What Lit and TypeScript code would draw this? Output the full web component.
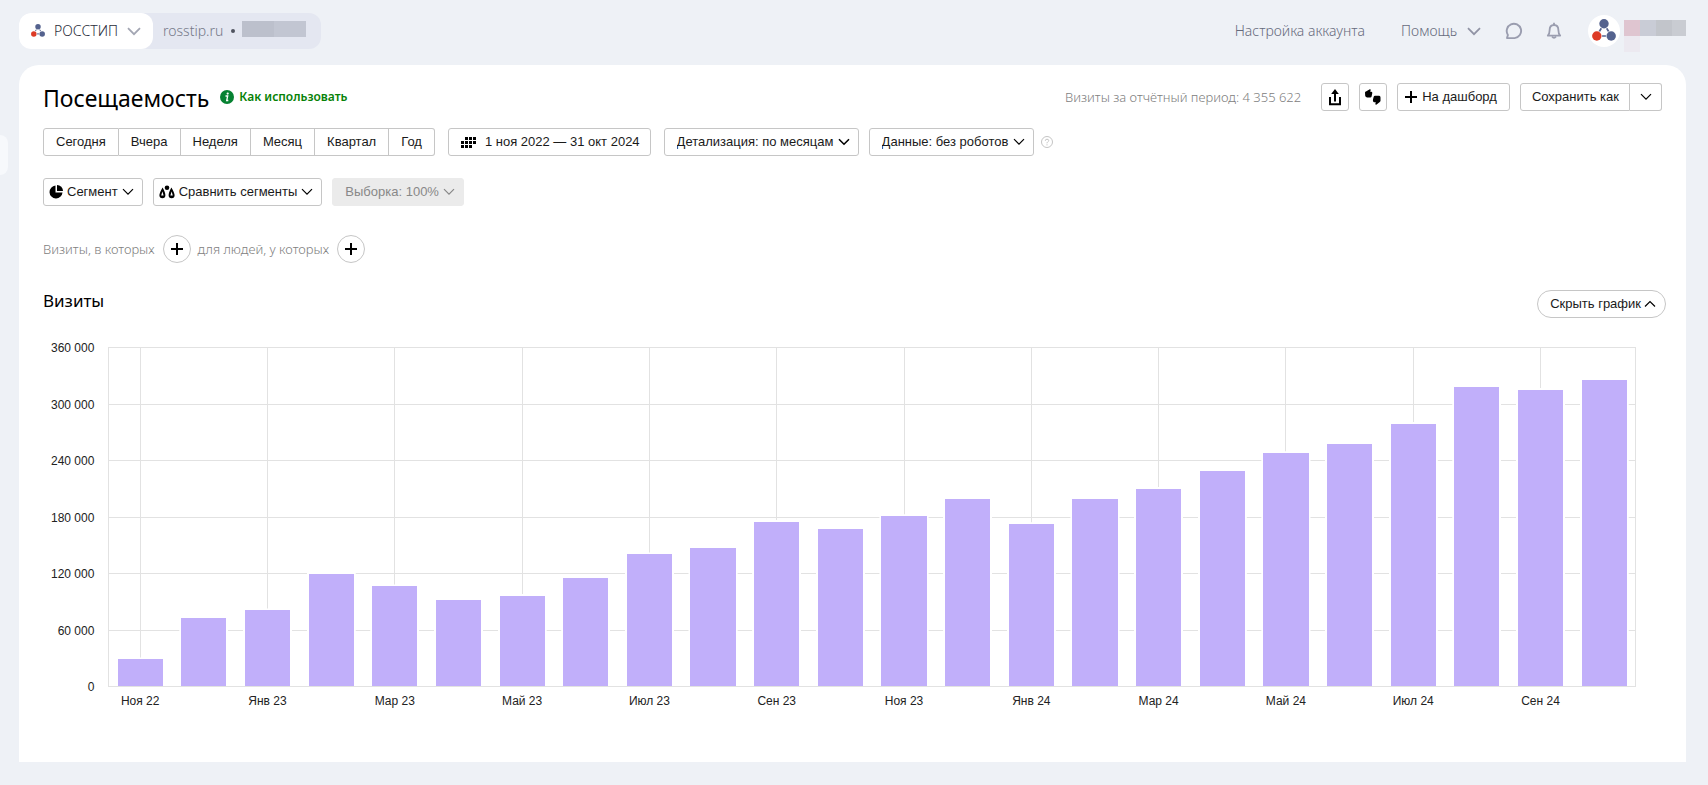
import { LitElement, html, svg, css } from "lit";
import { customElement, property, state } from "lit/decorators.js";
import { classMap } from "lit/directives/class-map.js";

const glyphs = {
  share: { w: 14, h: 18, body: svg`<path d="M2 9v7.200h10V9" fill="none" stroke="currentColor" stroke-width="2"/><path d="M7 13.500V4" stroke="currentColor" stroke-width="2"/><path d="M7 1l3.800 5H3.200z" fill="currentColor"/>` },
  thumbs: { w: 18, h: 16, body: svg`<path d="M1 3.600Q1 2.600 2.400 2.200L5.800.2Q7 0 6.600 1.400L6.200 2.700h1.200q1.100.2.9 1.300L7.600 7.400Q7.300 8.400 6.200 8.400H3Q1.300 8.200 1.200 6.800Z" fill="currentColor"/><path d="M9 12q-.2-1 .1-2l.6-2.300Q10 6.800 11 6.800h4.200q1.300.2 1.300 1.600v3.300q0 .9-1 1.500L12.600 15.600q-1.500.4-1.200-1.200l.4-1.200H10Q9.100 13 9 12Z" fill="currentColor"/>` },
  plus: { w: 12, h: 12, body: svg`<path d="M6 0v12M0 6h12" stroke="currentColor" stroke-width="2"/>` },
  calendar: { w: 15, h: 11, body: svg`<path d="M4 0h3v3H4zM8 0h3v3H8zM12 0h3v3h-3zM0 4h3v3H0zM4 4h3v3H4zM8 4h3v3H8zM12 4h3v3h-3zM0 8h3v3H0zM4 8h3v3H4zM8 8h3v3H8z" fill="currentColor"/>` },
  pie: { w: 14, h: 14, body: svg`<path d="M6.500.5v7h7A6.500 6.500 0 1 1 6.500.5Z" fill="currentColor"/><path d="M8 0a6 6 0 0 1 6 6H8Z" fill="currentColor"/>` },
  scales: { w: 16, h: 14, body: svg`<circle cx="8" cy="2.800" r="2.300" fill="currentColor"/><path d="M3.600 2.500Q6.400 7.500 6.400 10.300a3 3 0 0 1-6 0Q.4 8 3.600 2.500ZM12.400 2.500q3.200 5.500 3.200 7.800a3 3 0 0 1-6 0Q9.600 7.500 12.400 2.500Z" fill="currentColor"/><path d="M3.400 6.500l1.200 4h-2.400zM12.600 6.500l1.200 4h-2.400z" fill="#fff"/>` },
  down: { w: 12, h: 8, body: svg`<path d="M1 1.200l5 5 5-5" fill="none" stroke="currentColor" stroke-width="1.200"/>` },
  downBold: { w: 12, h: 8, body: svg`<path d="M1 1.200l5 5 5-5" fill="none" stroke="currentColor" stroke-width="1.600"/>` },
  up: { w: 12, h: 8, body: svg`<path d="M1 6.500l5-5 5 5" fill="none" stroke="currentColor" stroke-width="1.200"/>` },
  downWide: { w: 14, h: 9, body: svg`<path d="M1 1.200l6 6 6-6" fill="none" stroke="currentColor" stroke-width="1.800"/>` },
  info: { w: 14, h: 14, body: svg`<circle cx="7" cy="7" r="7" fill="currentColor"/><circle cx="7.700" cy="3.600" r="1.100" fill="#fff"/><path d="M5.500 6h2.200L6.700 10.500h1.600" fill="none" stroke="#fff" stroke-width="1.300"/>` },
  help: { w: 12, h: 12, body: svg`<circle cx="6" cy="6" r="5.500" fill="none" stroke="currentColor"/><path d="M4.300 4.800q0-1.600 1.700-1.600t1.700 1.400q0 .9-1 1.400-.7.400-.7 1.300M6 8.300v1.100" fill="none" stroke="currentColor"/>` },
  chat: { w: 18, h: 18, body: svg`<path d="M2 16.100l.9-3.200A7.200 7.200 0 1 1 9.600 16.100Z" fill="none" stroke="currentColor" stroke-width="1.900" stroke-linejoin="round"/>` },
  bell: { w: 16, h: 18, body: svg`<path d="M1.800 13.600h12.400c-1.600-1.500-1.800-3-1.800-5.400C12.400 5.300 10.800 3 8 3S3.600 5.300 3.600 8.200c0 2.400-.2 3.900-1.800 5.400Z" fill="none" stroke="currentColor" stroke-width="1.800" stroke-linejoin="round"/><path d="M8 3V.8M6 14.500q2 2.500 4 0" fill="none" stroke="currentColor" stroke-width="1.800"/>` },
};
type Glyph = keyof typeof glyphs;
const icon = (name: Glyph) => {
  const g = glyphs[name];
  return html`<svg class="icon" width=${g.w} height=${g.h} viewBox="0 0 ${g.w} ${g.h}" aria-hidden="true">${g.body}</svg>`;
};

const logo = (size: number) => html`<svg class="icon" width=${size} height=${size} viewBox="0 0 24 24" aria-hidden="true">
  <path d="M12 5L4.500 17h15Z" fill="none" stroke="#54628e" stroke-width="1.700"/>
  <circle cx="12" cy="4.800" r="5.400" fill="#fff"/><circle cx="4.800" cy="17" r="5.400" fill="#fff"/><circle cx="19.200" cy="17" r="5.400" fill="#fff"/>
  <circle cx="12" cy="4.800" r="4.700" fill="#54628e"/><circle cx="4.800" cy="17" r="4.700" fill="#dd3b26"/><circle cx="19.200" cy="17" r="4.700" fill="#54628e"/>
</svg>`;

interface Month { label: string; visits: number }

const months: Month[] = [
  ["Ноя 22", 29300], ["Дек 22", 72800], ["Янв 23", 81300], ["Фев 23", 119800],
  ["Мар 23", 106800], ["Апр 23", 92300], ["Май 23", 96800], ["Июн 23", 115300],
  ["Июл 23", 140800], ["Авг 23", 147300], ["Сен 23", 175300], ["Окт 23", 167800],
  ["Ноя 23", 181300], ["Дек 23", 199300], ["Янв 24", 172800], ["Фев 24", 199300],
  ["Мар 24", 210300], ["Апр 24", 229300], ["Май 24", 248300], ["Июн 24", 257800],
  ["Июл 24", 279300], ["Авг 24", 318300], ["Сен 24", 315300], ["Окт 24", 325800],
].map(([label, visits]) => ({ label: label as string, visits: visits as number }));

@customElement("visits-chart")
export class VisitsChart extends LitElement {
  @property({ attribute: false }) data: Month[] = [];
  @property({ type: Number }) step = 60000;
  @property({ type: Number }) max = 360000;

  static styles = css`
    :host { display: block; font: 12px/16px "Liberation Sans", Arial, sans-serif; color: #222; }
    .chart { display: grid; grid-template-columns: auto 1fr; column-gap: 14px; row-gap: 6px; }
    .scale { display: flex; flex-direction: column; justify-content: space-between; margin: -7px 0 -8px; text-align: right; white-space: nowrap; }
    .plot { display: grid; height: 340px; }
    .lines, .bars { grid-area: 1 / 1; }
    .lines { display: grid; grid-auto-rows: 1fr; border: solid #e2e2e2; border-width: 0 1px 1px; }
    .line { border-top: 1px solid #e2e2e2; }
    .bars, .months { display: grid; grid-auto-flow: column; grid-auto-columns: minmax(0, 1fr); }
    .slot { display: flex; align-items: flex-end; justify-content: center; padding-bottom: 1px; }
    .marked { background: linear-gradient(#e2e2e2, #e2e2e2) center / 1px 100% no-repeat; }
    .bar { width: 71%; background: #c1affa; box-shadow: 0 0 0 2px #fff; clip-path: inset(-2px -2px 0); }
    .months { grid-column: 2; text-align: center; white-space: nowrap; }
  `;

  render() {
    const count = this.max / this.step;
    const ticks = Array.from({ length: count + 1 }, (_, i) => this.max - i * this.step);
    return html`<div class="chart">
      <div class="scale">${ticks.map((t) => html`<span>${String(t).replace(/(\d)(?=(\d{3})+$)/g, "$1\u00a0")}</span>`)}</div>
      <div class="plot">
        <div class="lines">${ticks.slice(1).map(() => html`<div class="line"></div>`)}</div>
        <div class="bars">${this.data.map((m, i) => html`
          <div class=${classMap({ slot: true, marked: i % 2 === 0 })}>
            <div class="bar" style="height:calc(${((m.visits / this.max) * 100).toFixed(2)}% - 1px)"></div>
          </div>`)}</div>
      </div>
      <div class="months">${this.data.map((m, i) => html`<span>${i % 2 === 0 ? m.label : ""}</span>`)}</div>
    </div>`;
  }
}

@customElement("app-root")
export class AppRoot extends LitElement {
  @state() private chartOpen = true;

  static styles = css`
    :host { display: block; box-sizing: border-box; position: relative; min-height: 100vh; padding: 13px 22px 23px 19px;
      background: #eef1f6; color: #000; font: 12px/16px "Noto Sans", "Open Sans", sans-serif; }
    * { box-sizing: border-box; }
    .icon { display: block; flex: none; }
    button, select { font: 13px/16px "Liberation Sans", Arial, sans-serif; color: #1a1a1a; margin: 0; }
    a { text-decoration: none; }

    .top { display: flex; align-items: center; justify-content: space-between; height: 36px; font-size: 14px; line-height: 20px; font-weight: 300; color: #666a7c; }
    .counter { display: flex; align-items: center; height: 36px; border-radius: 12px; background: #e4e7f1; padding-right: 15px; }
    .project { display: flex; align-items: center; height: 36px; padding: 0 12px; margin-right: 10px; border: 0; border-radius: 12px; background: #fff;
      font: 300 14px/20px "Noto Sans", sans-serif; color: #2a2d3a; gap: 9px; }
    .project .icon:last-child { color: #a3a6b3; }
    .site { color: #747888; }
    .dot { width: 4px; height: 4px; margin: 0 7px 0 8px; border-radius: 50%; background: #50535f; }
    .masked-id { width: 64px; height: 16px; margin-bottom: 4px; background: linear-gradient(90deg, #bcc0cc 50%, #c2c6d2 50%); }
    .account { display: flex; align-items: center; }
    .account a { color: #666a7c; }
    .help-menu { display: flex; align-items: center; gap: 10px; margin: 0 24px 0 36px; padding: 0; border: 0; background: none; font: 300 14px/20px "Noto Sans", sans-serif; color: #666a7c; }
    .help-menu .icon { color: #9194a5; }
    .plain { padding: 0; border: 0; background: none; color: #9a9daf; }
    .plain + .plain { margin-left: 23px; }
    .avatar { display: grid; place-items: center; width: 32px; height: 32px; margin: 0 4px 0 26px; border-radius: 50%; background: #fff; }
    .masked-user { align-self: flex-start; width: 62px; height: 32px; margin: 5px 0 -12px;
      background: linear-gradient(90deg, #dfc5d0 16px, #c9ccd6 16px 32px, #c2c5cb 32px 48px, #c9ccd2 48px) 0 0 / 100% 16px no-repeat,
        linear-gradient(#ece9f0, #ece9f0) 0 16px / 16px 16px no-repeat; }

    .handle { position: absolute; left: 0; top: 135px; width: 8px; height: 40px; padding: 0; border: 0; border-radius: 0 8px 8px 0; background: #f7f9fc; }

    .card { margin-top: 16px; padding: 18px 24px 53px; border-radius: 20px 20px 0 0; background: #fff; }
    .row { display: flex; align-items: center; }
    h1 { margin: 0 11px 0 0; padding-top: 2px; font-size: 23px; line-height: 26px; font-weight: 400; }
    h2 { margin: 0; font-size: 17px; line-height: 24px; font-weight: 400; }
    .guide { display: flex; align-items: center; gap: 5px; color: #078232; font-weight: 600; }
    .guide span { color: #078207; }
    .summary { margin-left: auto; margin-right: 20px; }
    .summary, .audience { font-size: 13px; font-weight: 300; color: #808080; }
    .actions { display: flex; gap: 10px; }
    .btn { display: inline-flex; align-items: center; height: 28px; border: 1px solid #c6c6c6; border-radius: 3px; background: #fff; padding: 0 12px; white-space: nowrap; }
    .btn .icon { color: #000; }
    .square { width: 28px; padding: 0; justify-content: center; }
    .dash { padding: 0 12px 0 7px; gap: 5px; }
    .group { display: flex; }
    .group .btn { border-radius: 0; }
    .group .btn + .btn { border-left-width: 0; }
    .group .btn:first-child { border-radius: 3px 0 0 3px; }
    .group .btn:last-child { border-radius: 0 3px 3px 0; }
    .arrow { width: 32px; padding: 0; justify-content: center; }
    .group .save { padding: 0 10px 0 11px; }

    .period { margin-top: 17px; gap: 13px; }
    .period .date { gap: 9px; padding-right: 10px; }
    .filters { display: flex; align-items: center; gap: 10px; }
    .pick { display: grid; align-items: center; }
    .pick select, .pick .icon { grid-area: 1 / 1; }
    .pick .icon { justify-self: end; margin-right: 9px; pointer-events: none; }
    .pick select { appearance: none; height: 28px; padding: 0 24px 0 12px; border: 1px solid #c6c6c6; border-radius: 3px; background: #fff; }
    .pick select:disabled { border-color: #ebebeb; background: #ebebeb; color: #888; opacity: 1; }
    .pick select:disabled + .icon { color: #888; }
    .hint { color: #c4c4c4; margin-left: -3px; }

    .segments { margin-top: 22px; gap: 10px; }
    .segments .btn { padding: 0 8px 0 5px; gap: 4px; }

    .audience { margin-top: 29px; }
    .add { display: grid; place-items: center; width: 28px; height: 28px; margin: 0 7px 0 8px; padding: 0; border: 1px solid #c6c6c6; border-radius: 50%; background: #fff; color: #000; }

    .chart-head { display: flex; align-items: flex-start; justify-content: space-between; margin-top: 26px; margin-right: -4px; }
    .toggle { margin-top: 1px; border-radius: 14px; gap: 3px; padding: 0 9px 0 12px; }
    .chart-body { margin: 29px 26px 0 0; padding-left: 8px; }
  `;

  private select(label: string, value: string, glyph: Glyph, disabled = false) {
    return html`<label class="pick"><select aria-label=${label} ?disabled=${disabled}><option>${value}</option></select>${icon(glyph)}</label>`;
  }

  render() {
    return html`
      <header class="top">
        <div class="counter">
          <button class="project">${logo(14)}<span>РОССТИП</span>${icon("downWide")}</button>
          <span class="site">rosstip.ru</span><span class="dot"></span><span class="masked-id"></span>
        </div>
        <nav class="account">
          <a href="#settings">Настройка аккаунта</a>
          <button class="help-menu"><span>Помощь</span>${icon("downWide")}</button>
          <button class="plain" aria-label="Чат">${icon("chat")}</button>
          <button class="plain" aria-label="Уведомления">${icon("bell")}</button>
          <span class="avatar">${logo(24)}</span>
          <span class="masked-user"></span>
        </nav>
      </header>
      <button class="handle" aria-label="Меню"></button>

      <main class="card">
        <div class="row">
          <h1>Посещаемость</h1>
          <a class="guide" href="#guide">${icon("info")}<span>Как использовать</span></a>
          <span class="summary">Визиты за отчётный период: 4 355 622</span>
          <div class="actions">
            <button class="btn square" aria-label="Поделиться">${icon("share")}</button>
            <button class="btn square" aria-label="Оценить отчёт">${icon("thumbs")}</button>
            <button class="btn dash">${icon("plus")}<span>На дашборд</span></button>
            <div class="group">
              <button class="btn save">Сохранить как</button>
              <button class="btn arrow" aria-label="Ещё варианты">${icon("down")}</button>
            </div>
          </div>
        </div>

        <div class="row period">
          <div class="group">
            ${["Сегодня", "Вчера", "Неделя", "Месяц", "Квартал", "Год"].map((p) => html`<button class="btn">${p}</button>`)}
          </div>
          <button class="btn date">${icon("calendar")}<span>1 ноя 2022 — 31 окт 2024</span></button>
          <div class="filters">
            ${this.select("Детализация", "Детализация: по месяцам", "downBold")}
            ${this.select("Данные", "Данные: без роботов", "down")}
            <button class="plain hint" aria-label="Справка">${icon("help")}</button>
          </div>
        </div>

        <div class="row segments">
          <button class="btn">${icon("pie")}<span>Сегмент</span>${icon("down")}</button>
          <button class="btn">${icon("scales")}<span>Сравнить сегменты</span>${icon("down")}</button>
          ${this.select("Выборка", "Выборка: 100%", "down", true)}
        </div>

        <div class="row audience">
          <span>Визиты, в которых</span>
          <button class="add" aria-label="Добавить условие для визитов">${icon("plus")}</button>
          <span>для людей, у которых</span>
          <button class="add" aria-label="Добавить условие для людей">${icon("plus")}</button>
        </div>

        <div class="chart-head">
          <h2>Визиты</h2>
          <button class="btn toggle" @click=${() => (this.chartOpen = !this.chartOpen)}>
            <span>${this.chartOpen ? "Скрыть график" : "Показать график"}</span>${icon(this.chartOpen ? "up" : "down")}
          </button>
        </div>
        ${this.chartOpen ? html`<div class="chart-body"><visits-chart .data=${months}></visits-chart></div>` : ""}
      </main>
    `;
  }
}
